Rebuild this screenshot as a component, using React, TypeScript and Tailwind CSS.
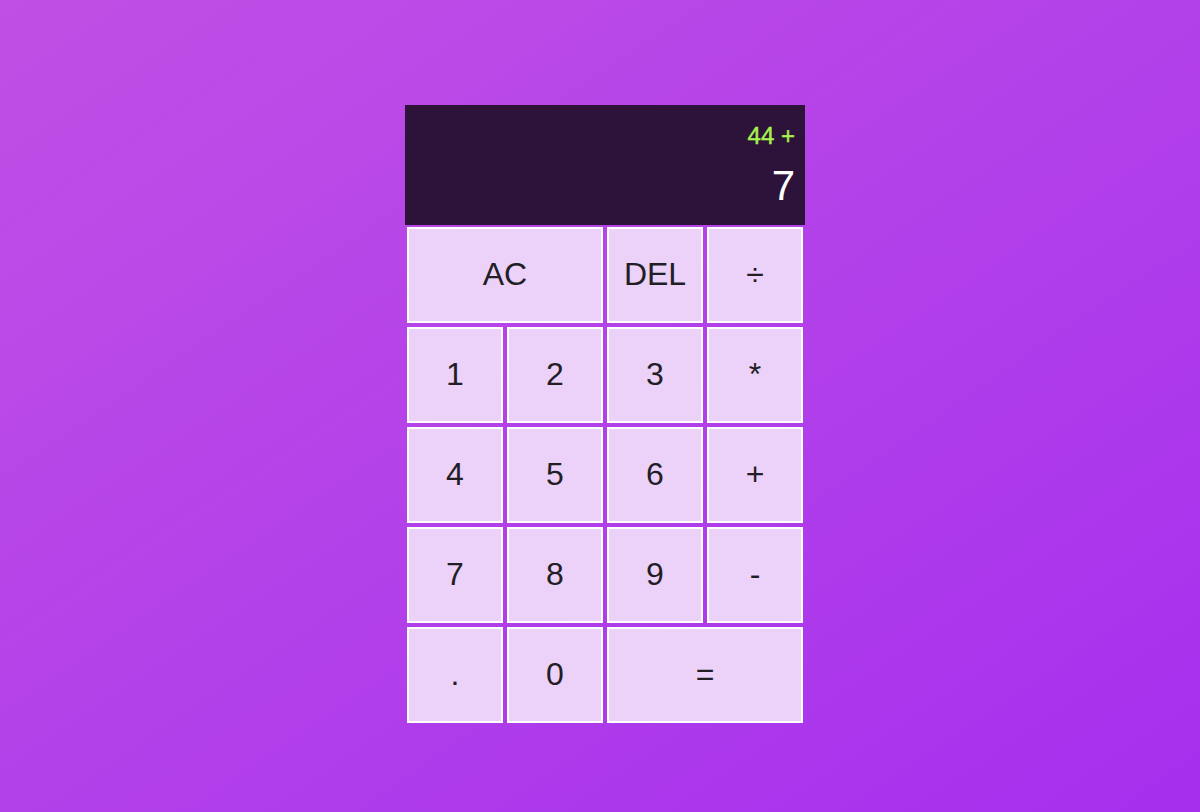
const keys: { label: string; wide?: boolean }[] = [
  { label: "AC", wide: true },
  { label: "DEL" },
  { label: "÷" },
  { label: "1" },
  { label: "2" },
  { label: "3" },
  { label: "*" },
  { label: "4" },
  { label: "5" },
  { label: "6" },
  { label: "+" },
  { label: "7" },
  { label: "8" },
  { label: "9" },
  { label: "-" },
  { label: "." },
  { label: "0" },
  { label: "=", wide: true },
];

function Display() {
  return (
    <div className="col-span-4 bg-[#2d1339] flex flex-col items-end pt-[19px] pr-[10px] break-all">
      <div className="text-[24px] leading-none text-[#a7f24b] [-webkit-text-stroke:0.4px_#a7f24b]">44 +</div>
      <div className="mt-[17px] text-[42px] leading-none text-white">7</div>
    </div>
  );
}

export default function App() {
  return (
    <div className="min-h-screen w-full bg-gradient-to-br from-[#c04fe5] to-[#a62eee] flex justify-center pt-[105px] pl-[10px] font-['Liberation_Sans',Arial,sans-serif]">
      <div className="grid grid-cols-[repeat(4,100px)] grid-rows-[120px_repeat(5,100px)] h-fit">
        <Display />
        {keys.map((k) => (
          <button
            key={k.label}
            className={
              "m-[2px] pb-[3px] border-2 border-white bg-[#ecd1f8] text-[32px] text-[#221e26] flex items-center justify-center cursor-pointer" +
              (k.wide ? " col-span-2" : "")
            }
          >
            {k.label}
          </button>
        ))}
      </div>
    </div>
  );
}
